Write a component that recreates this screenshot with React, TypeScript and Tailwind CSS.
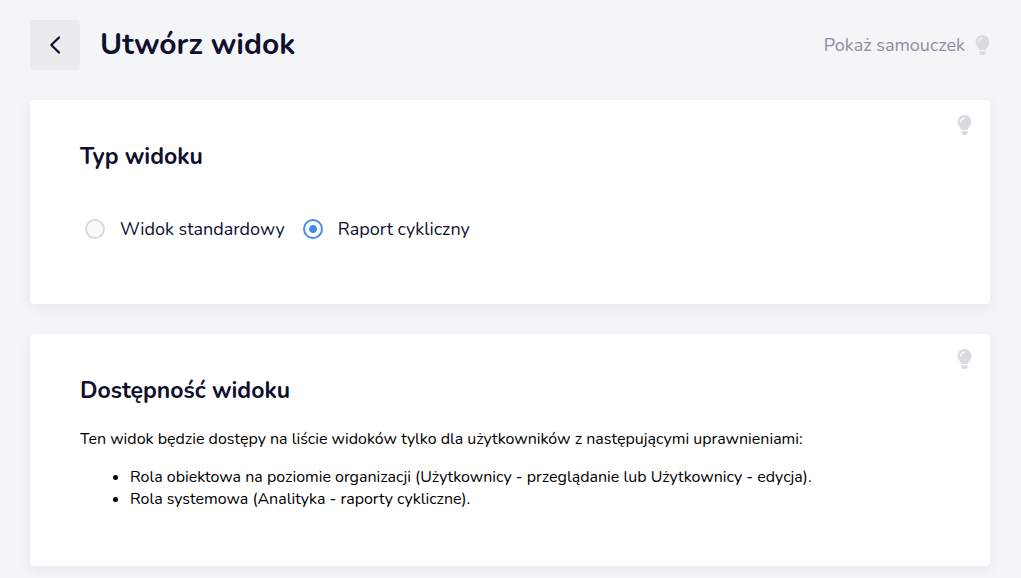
import { useState } from "react";
import { FaLightbulb } from "react-icons/fa";

const viewTypes = [
  { id: "standard", label: "Widok standardowy" },
  { id: "report", label: "Raport cykliczny" },
];

function HintButton() {
  return (
    <button type="button" aria-label="Podpowiedź" className="absolute top-[15px] right-[18px] text-[#dad9de]">
      <FaLightbulb className="h-5 w-[15px]" />
    </button>
  );
}

export default function App() {
  const [type, setType] = useState("report");
  return (
    <div className="min-h-screen bg-[#f4f5f7] pt-5 pr-[31px] pb-3 pl-[30px] font-['Nunito','Open_Sans',sans-serif] text-[#0f0f2f]">
      <header className="flex items-center gap-5">
        <button type="button" aria-label="Wstecz" className="flex size-[50px] items-center justify-center rounded bg-[#ebebed]">
          <svg viewBox="0 0 20 20" className="size-5" fill="none" stroke="currentColor" strokeWidth="2.3" strokeLinecap="round" strokeLinejoin="round" aria-hidden="true">
            <path d="M14 2.5 6.3 10l7.7 7.5" />
          </svg>
        </button>
        <h1 className="flex-1 text-[30px] leading-[50px] font-bold">Utwórz widok</h1>
        <button type="button" className="flex items-center gap-[10px] text-lg text-[#8f8ea0]">
          Pokaż samouczek
          <FaLightbulb className="h-5 w-[15px] text-[#dad9de]" />
        </button>
      </header>
      <main className="mt-[30px] flex flex-col gap-[30px]">
        <section className="relative rounded bg-white px-[50px] pt-10 pb-[60px] shadow-[0_3px_14px_rgba(20,20,50,0.06)]">
          <HintButton />
          <h2 className="text-[23px] leading-[34px] font-bold">Typ widoku</h2>
          <div className="mt-10 flex gap-[18px] pl-[5px]">
            {viewTypes.map((v) => (
              <label key={v.id} className="flex items-center gap-[15px] text-lg leading-[30px]">
                <input type="radio" name="view-type" checked={type === v.id} onChange={() => setType(v.id)} className="size-5 appearance-none rounded-full border-2 border-[#dad9de] bg-[#fafafa] checked:border-[#448aef] checked:bg-[radial-gradient(circle,#448aef_0_3.5px,#fff_4.5px)]" />
                {v.label}
              </label>
            ))}
          </div>
        </section>
        <section className="relative rounded bg-white px-[50px] pt-10 pb-14 shadow-[0_3px_14px_rgba(20,20,50,0.06)]">
          <HintButton />
          <h2 className="text-[23px] leading-[34px] font-bold">Dostępność widoku</h2>
          <div className="mt-5 text-base leading-[22px] text-black">
            <p>Ten widok będzie dostępy na liście widoków tylko dla użytkowników z następującymi uprawnieniami:</p>
            <ul className="mt-4 list-disc pl-[50px]">
              <li>Rola obiektowa na poziomie organizacji (Użytkownicy - przeglądanie lub Użytkownicy - edycja).</li>
              <li>Rola systemowa (Analityka - raporty cykliczne).</li>
            </ul>
          </div>
        </section>
      </main>
    </div>
  );
}
